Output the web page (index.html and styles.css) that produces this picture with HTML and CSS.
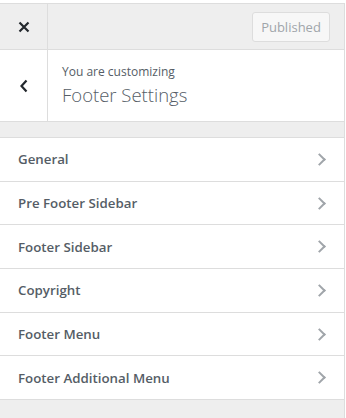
FILE: index.html
```html
<!DOCTYPE html>
<html lang="en">
<head>
  <meta charset="UTF-8">
  <meta name="viewport" content="width=device-width, initial-scale=1.0">
  <title>Customizer</title>
  <link rel="stylesheet" href="styles.css">
</head>
<body>
  <div class="panel">
    <div class="topbar">
      <button class="close-btn" type="button" aria-label="Close">
        <svg width="12" height="12" viewBox="0 0 12 12"><path d="M1.5 1.5 L10.5 10.5 M10.5 1.5 L1.5 10.5" stroke="#23282d" stroke-width="2.2" fill="none"/></svg>
      </button>
      <div class="topbar-actions">
        <button class="publish-btn" type="button" disabled>Published</button>
      </div>
    </div>
    <div class="section-head">
      <button class="back-btn" type="button" aria-label="Back">
        <svg width="10" height="14" viewBox="0 0 10 14"><path d="M7.5 1.5 L2.5 7 L7.5 12.5" stroke="#23282d" stroke-width="2.2" fill="none"/></svg>
      </button>
      <div class="section-title">
        <span class="customizing">You are customizing</span>
        <h1>Footer Settings</h1>
      </div>
    </div>
    <ul class="section-list">
      <li class="section-item">General<span class="chev"></span></li>
      <li class="section-item">Pre Footer Sidebar<span class="chev"></span></li>
      <li class="section-item">Footer Sidebar<span class="chev"></span></li>
      <li class="section-item">Copyright<span class="chev"></span></li>
      <li class="section-item">Footer Menu<span class="chev"></span></li>
      <li class="section-item">Footer Additional Menu<span class="chev"></span></li>
    </ul>
  </div>
</body>
</html>
```

FILE: styles.css
```css
body {
  margin: 0;
  padding-top: 3px;
  background-color: #fff;
  font-family: 'Open Sans', 'Noto Sans', sans-serif;
  color: #555d66;
  height: 415px;
  overflow: hidden;
}
.panel {
  width: 345px;
  height: 415px;
  background-color: #eee;
  border-top: 1px solid #ddd;
  border-right: 1px solid #ddd;
  box-sizing: border-box;
}
.topbar {
  display: flex;
  height: 45px;
  border-bottom: 1px solid #ddd;
}
.close-btn {
  width: 48px;
  border: none;
  border-right: 1px solid #ddd;
  background: none;
  padding: 0;
  display: flex;
  align-items: center;
  justify-content: center;
}
.topbar-actions {
  flex: 1;
  display: flex;
  justify-content: flex-end;
  align-items: center;
  padding-right: 14px;
}
.publish-btn {
  width: 78px;
  height: 30px;
  margin-top: 1px;
  background-color: #f7f7f7;
  border: 1px solid #ddd;
  border-radius: 3px;
  color: #a0a5aa;
  font-family: inherit;
  font-size: 13px;
  padding: 0;
}
.section-head {
  display: flex;
  height: 71px;
  background-color: #fff;
  border-bottom: 1px solid #ddd;
}
.back-btn {
  width: 48px;
  border: none;
  border-right: 1px solid #ddd;
  background: none;
  padding: 0;
  display: flex;
  align-items: center;
  justify-content: center;
}
.section-title {
  padding: 13px 0 0 14px;
}
.customizing {
  display: block;
  font-size: 12px;
  color: #555d66;
  line-height: 17px;
}
.section-title h1 {
  margin: 3px 0 0;
  font-size: 18.5px;
  font-weight: 300;
  line-height: 24px;
  color: #555d66;
}
.section-list {
  list-style: none;
  margin: 15px 0 0;
  padding: 0;
  border-bottom: 1px solid #ddd;
}
.section-item {
  display: flex;
  align-items: center;
  justify-content: space-between;
  height: 42.7px;
  padding: 0 18px;
  background-color: #fff;
  border-top: 1px solid #ddd;
  font-size: 13.3px;
  font-weight: 600;
  color: #555d66;
}
.chev {
  width: 7px;
  height: 7px;
  border-top: 2px solid #a0a5aa;
  border-right: 2px solid #a0a5aa;
  transform: rotate(45deg);
  margin-right: 2px;
}
```
